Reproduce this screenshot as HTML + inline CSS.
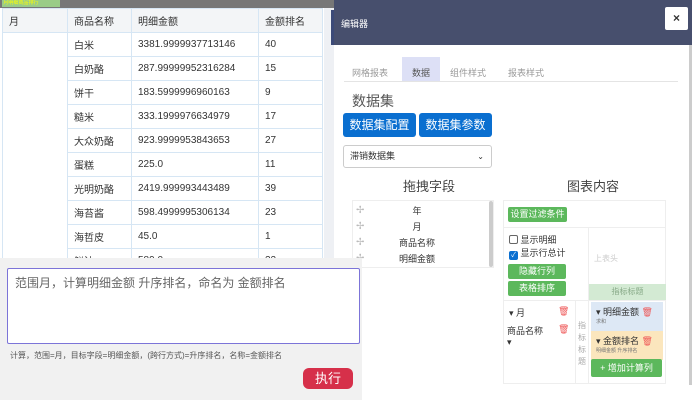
<!DOCTYPE html>
<html><head><meta charset="utf-8"><style>
*{box-sizing:border-box;margin:0;padding:0}
body{width:692px;height:400px;overflow:hidden;position:relative;background:#fff;font-family:"Liberation Sans","Noto Sans CJK SC",sans-serif;color:#333}
.abs{position:absolute}
table{border-collapse:collapse;position:absolute;left:2px;top:8px;font-size:10px}
td{border:1px solid #d6e6f4;height:24px;padding-left:6px;vertical-align:middle}
tr.h td{background:#f3f5f7;height:24px}
.g{background:#5cb85c;color:#fff;font-size:9px;border-radius:2px;text-align:center;line-height:15px}
.t{color:#e55;font-size:9px}
</style></head><body>
<div class="abs" style="left:0;top:0;width:334px;height:8px;background:#777"></div>
<div class="abs" style="left:2px;top:0;width:58px;height:7px;background:#9c8;font-size:5px;color:#ff0;line-height:7px">&nbsp;月明细商品排行</div>
<table>
<tr class="h"><td style="width:65px">月</td><td style="width:64px">商品名称</td><td style="width:127px">明细金额</td><td style="width:64px">金额排名</td></tr>
<tr><td rowspan="10" style="vertical-align:top"></td><td>白米</td><td>3381.9999937713146</td><td>40</td></tr>
<tr><td>白奶酪</td><td>287.99999952316284</td><td>15</td></tr>
<tr><td>饼干</td><td>183.5999996960163</td><td>9</td></tr>
<tr><td>糙米</td><td>333.1999976634979</td><td>17</td></tr>
<tr><td>大众奶酪</td><td>923.9999953843653</td><td>27</td></tr>
<tr><td>蛋糕</td><td>225.0</td><td>11</td></tr>
<tr><td>光明奶酪</td><td>2419.999993443489</td><td>39</td></tr>
<tr><td>海苔酱</td><td>598.4999995306134</td><td>23</td></tr>
<tr><td>海哲皮</td><td>45.0</td><td>1</td></tr>
<tr><td>鲜油</td><td>589.0</td><td>22</td></tr>
</table>
<div class="abs" style="left:324px;top:8px;width:10px;height:250px;background:#eef0f4"></div>
<div class="abs" style="left:331px;top:10px;width:3px;height:35px;background:#3c4a78"></div>
<!-- editor -->
<div class="abs" style="left:334px;top:0;width:358px;height:400px;background:#fff">
<div class="abs" style="left:0;top:0;width:358px;height:45px;background:#474f6d"></div>
<div class="abs" style="left:7px;top:17px;font-size:9px;color:#fff">编辑器</div>
<div class="abs" style="left:331px;top:7px;width:23px;height:23px;background:#fff;border-radius:2px;text-align:center;font-size:12px;line-height:22px;font-weight:bold;color:#333">×</div>
<div class="abs" style="left:355px;top:45px;width:3px;height:340px;background:#ccc"></div>
<div class="abs" style="left:18px;top:66px;font-size:9px;color:#999">网格报表</div>
<div class="abs" style="left:68px;top:57px;width:38px;height:25px;background:#dde0f6"></div>
<div class="abs" style="left:78px;top:66px;font-size:9px;color:#555">数据</div>
<div class="abs" style="left:116px;top:66px;font-size:9px;color:#999">组件样式</div>
<div class="abs" style="left:174px;top:66px;font-size:9px;color:#999">报表样式</div>
<div class="abs" style="left:10px;top:81px;width:334px;height:1px;background:#e4e4e4"></div>
<div class="abs" style="left:18px;top:91px;font-size:14px;color:#555">数据集</div>
<div class="abs" style="left:9px;top:113px;width:73px;height:24px;background:#0a6fd0;border-radius:3px;color:#fff;font-size:12px;text-align:center;line-height:24px">数据集配置</div>
<div class="abs" style="left:85px;top:113px;width:73px;height:24px;background:#0a6fd0;border-radius:3px;color:#fff;font-size:12px;text-align:center;line-height:24px">数据集参数</div>
<div class="abs" style="left:9px;top:145px;width:149px;height:23px;border:1px solid #ccc;border-radius:3px;font-size:9px;line-height:21px;padding-left:6px">滞销数据集<span style="position:absolute;right:7px;font-size:8px">⌄</span></div>
<div class="abs" style="left:69px;top:176px;font-size:13px;color:#444">拖拽字段</div>
<div class="abs" style="left:233px;top:176px;font-size:13px;color:#444">图表内容</div>
<div class="abs" style="left:18px;top:200px;width:142px;height:68px;border:1px solid #eee"></div>
<div class="abs" style="left:155px;top:201px;width:4px;height:66px;background:#ccc;border-radius:2px"></div>
<div class="abs" style="left:22px;top:203px;font-size:10px;color:#bbb;line-height:16px">✢<br>✢<br>✢<br>✢</div>
<div class="abs" style="left:60px;top:203px;width:46px;font-size:9px;line-height:16px;text-align:center">年<br>月<br>商品名称<br>明细金额</div>
<!-- right panel -->
<div class="abs" style="left:169px;top:200px;width:163px;height:184px;border:1px solid #eee"></div>
<div class="abs g" style="left:174px;top:207px;width:59px">设置过滤条件</div>
<div class="abs" style="left:169px;top:227px;width:163px;height:1px;background:#eee"></div>
<div class="abs" style="left:254px;top:227px;width:1px;height:157px;background:#eee"></div>
<div class="abs" style="left:175px;top:234px;font-size:9px;line-height:13px"><span style="display:inline-block;width:9px;height:9px;border:1px solid #666;border-radius:2px;vertical-align:-1px"></span> 显示明细<br><span style="display:inline-block;width:9px;height:9px;background:#0a6fd0;border-radius:2px;vertical-align:-1px;color:#fff;font-size:7px;line-height:9px;text-align:center">✓</span> 显示行总计</div>
<div class="abs g" style="left:174px;top:264px;width:58px">隐藏行列</div>
<div class="abs g" style="left:174px;top:281px;width:58px">表格排序</div>
<div class="abs" style="left:260px;top:253px;font-size:8px;color:#ccc">上表头</div>
<div class="abs" style="left:255px;top:284px;width:77px;height:16px;background:#d3ead3;font-size:8px;color:#8a8;text-align:center;line-height:16px">指标标题</div>
<div class="abs" style="left:169px;top:300px;width:163px;height:1px;background:#eee"></div>
<div class="abs" style="left:175px;top:306px;font-size:9px">▾ 月</div>
<div class="abs t" style="left:224px;top:306px">🗑</div>
<div class="abs" style="left:173px;top:324px;font-size:9px">商品名称<br>▾</div>
<div class="abs t" style="left:224px;top:324px">🗑</div>
<div class="abs" style="left:241px;top:300px;width:1px;height:84px;background:#eee"></div>
<div class="abs" style="left:244px;top:320px;font-size:8px;color:#aaa;line-height:12px;width:8px">指标标题</div>
<div class="abs" style="left:257px;top:302px;width:72px;height:30px;background:#dde8f5;padding:3px 5px;font-size:9px">▾ 明细金额 <span class="t">🗑</span><div style="font-size:5px;color:#777">求和</div></div>
<div class="abs" style="left:257px;top:331px;width:72px;height:29px;background:#fbe6bd;padding:3px 5px;font-size:9px">▾ 金额排名 <span class="t">🗑</span><div style="font-size:5px;color:#777">明细金额 升序排名</div></div>
<div class="abs" style="left:257px;top:359px;width:71px;height:18px;background:#5cb85c;border-radius:2px;color:#fff;font-size:9px;text-align:center;line-height:18px">+ 增加计算列</div>
</div>
<!-- bottom panel -->
<div class="abs" style="left:0;top:258px;width:362px;height:142px;background:#f1f1f1"></div>
<div class="abs" style="left:7px;top:268px;width:353px;height:76px;background:#fff;border:1px solid #7c74d8;border-radius:2px;font-size:12px;color:#666;padding:5px 7px">范围月，计算明细金额 升序排名，命名为 金额排名</div>
<div class="abs" style="left:10px;top:350px;font-size:8px;color:#555">计算，范围=月，目标字段=明细金额，(跨行方式)=升序排名，名称=金额排名</div>
<div class="abs" style="left:303px;top:368px;width:50px;height:21px;background:#d6304a;border-radius:6px;color:#fff;font-size:13px;text-align:center;line-height:21px">执行</div>
</body></html>
